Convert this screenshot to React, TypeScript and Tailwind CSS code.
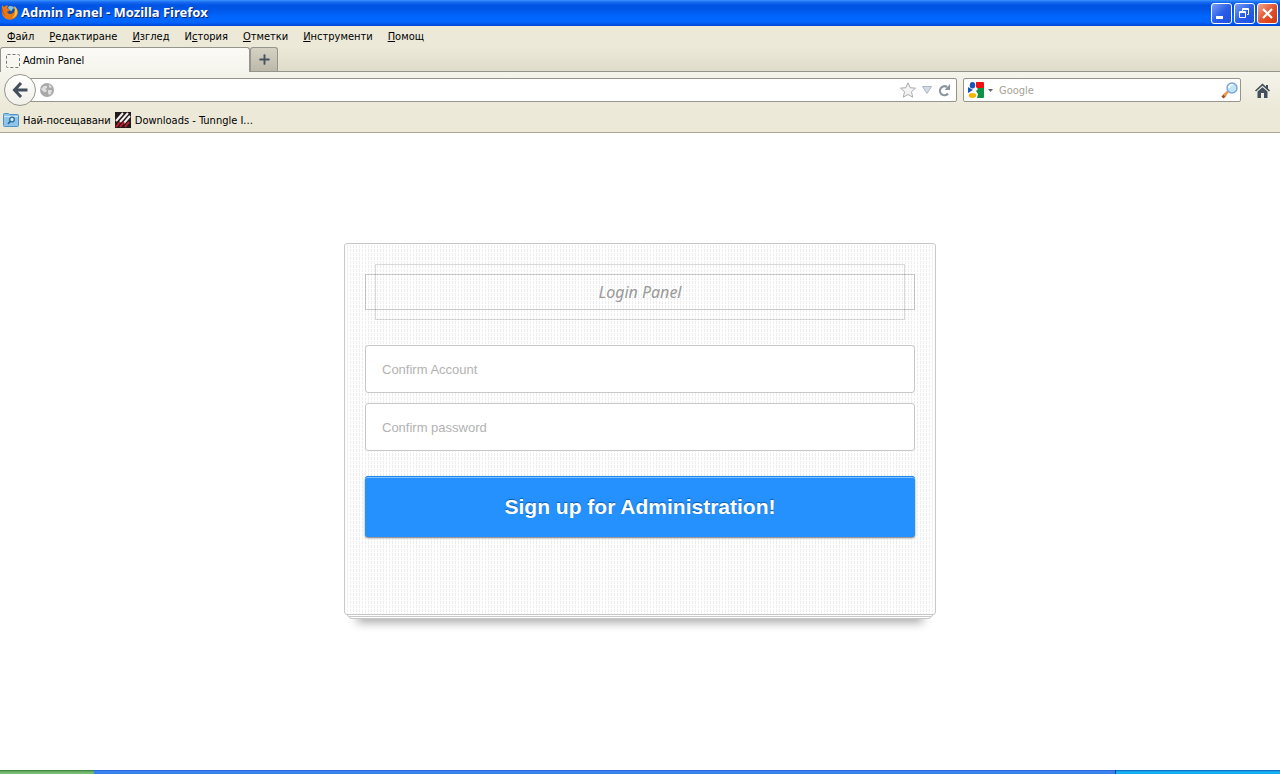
import {useState} from "react"
import {Plus} from "lucide-react"

interface IMenuItem {
    before: string
    key: string
    after: string
}

const menuItems: IMenuItem[] = [
    {before: "", key: "Ф", after: "айл"},
    {before: "", key: "Р", after: "едактиране"},
    {before: "", key: "И", after: "зглед"},
    {before: "И", key: "с", after: "тория"},
    {before: "", key: "О", after: "тметки"},
    {before: "", key: "И", after: "нструменти"},
    {before: "", key: "П", after: "омощ"},
]

function FirefoxLogo() {
    return (
        <svg width="18" height="18" viewBox="0 0 18 18" aria-hidden="true">
            <circle cx="9.5" cy="8" r="6.5" fill="#1d4f9e"/>
            <path d="M7 3c2-2 6-1 7 2-2-1-3 0-3 2-2 0-4-2-4-4z" fill="#7fc4ee"/>
            <path
                d="M1 1l2 2c1-1 3-2 4-1L6 4l3 2c0 1-2 1-3 2 1 2 4 3 6 1 2-1 2-4 1-7 5 3 5 9 1 12s-10 2-12-2C0 9 1 5 1 1z"
                fill="#e77817"/>
            <path d="M13 2c3 2 4 5 3 8-1 2-3 4-5 4 3-2 4-7 2-12z" fill="#fbc62c"/>
            <path d="M2 4c0 3 0 6 3 8-3-1-5-5-3-8z" fill="#b8410e"/>
        </svg>
    )
}

function TitleBar() {
    const control = "flex size-[21px] items-center justify-center rounded-[3px] border border-white"
    return (
        <div
            className="flex h-[26px] items-center justify-between bg-[linear-gradient(#3b95ff_0,#1a6df0_2px,#0054e3_5px,#0055e5_9px,#0066ff_17px,#0066ff_22px,#0046d5_26px)] pr-0.5">
            <div className="flex items-center gap-0.5 pl-px">
                <FirefoxLogo/>
                <span
                    className="font-['Noto_Sans','DejaVu_Sans',sans-serif] text-[13px] font-bold text-white [text-shadow:1px_1px_0_#0a246a]">Admin Panel - Mozilla Firefox</span>
            </div>
            <div className="flex gap-0.5">
                <button aria-label="Minimize"
                        className={`${control} bg-linear-to-br from-[#7a9cf4] via-[#2b5fe8] to-[#1b4fe0]`}>
                    <svg width="19" height="19"><path d="M4 13.5h7" stroke="#fff" strokeWidth="3"/></svg>
                </button>
                <button aria-label="Restore"
                        className={`${control} bg-linear-to-br from-[#7a9cf4] via-[#2b5fe8] to-[#1b4fe0]`}>
                    <svg width="19" height="19" fill="none" stroke="#fff">
                        <path d="M7.500 7V4.500h6v6H12M7 5.500h7"/>
                        <path d="M4.500 7.500h6v6h-6zM4 8.500h7"/>
                    </svg>
                </button>
                <button aria-label="Close"
                        className={`${control} bg-linear-to-br from-[#f0a48c] via-[#e2532c] to-[#d03a0c]`}>
                    <svg width="19" height="19"><path d="M5 5l9 9M14 5l-9 9" stroke="#fff" strokeWidth="2.2"/></svg>
                </button>
            </div>
        </div>
    )
}

function MenuBar() {
    return (
        <nav className="flex h-[21px] items-center gap-[15px] pt-0.5 pl-[7px]">
            {menuItems.map((item, index) => (
                <button key={index}>
                    {item.before}<span className="underline">{item.key}</span>{item.after}
                </button>
            ))}
        </nav>
    )
}

function TabStrip() {
    return (
        <div className="flex h-[25px] bg-linear-to-b from-[#ece9d8] to-[#dfdccb]">
            <button
                className="flex w-[250px] items-center gap-[3px] rounded-t-[3px] border border-b-0 border-[#96958b] bg-linear-to-b from-[#fbfaf6] to-[#f5f4ec] pt-0.5 pl-[5px]">
                <svg width="14" height="14" fill="none" stroke="#777" strokeDasharray="3 2">
                    <rect x=".5" y=".5" width="13" height="13" rx="1"/>
                </svg>
                Admin Panel
            </button>
            <div className="flex flex-1 border-b border-[#96958b]">
                <button aria-label="New tab"
                        className="flex w-7 items-center justify-center rounded-t-[3px] border border-b-0 border-[#96958b] bg-linear-to-b from-[#d5d2c3] to-[#bcb9ab]">
                    <Plus size={15} strokeWidth={3} color="#46525f"/>
                </button>
            </div>
        </div>
    )
}

function NavBar() {
    const [address, setAddress] = useState("")
    const [query, setQuery] = useState("")

    return (
        <div className="flex h-9 items-center bg-linear-to-b from-[#f5f4ec] to-[#ece9d8] pl-1 pr-2.5">
            <button aria-label="Back"
                    className="z-10 flex size-8 shrink-0 items-center justify-center rounded-full border border-[#96958b] bg-linear-to-b from-white to-[#f0efe8]">
                <svg width="16" height="16" viewBox="0 0 16 16" fill="none" stroke="#434f5c" strokeWidth="3">
                    <path d="M9 1L2.500 8 9 15M3 8h12.500"/>
                </svg>
            </button>
            <div
                className="-ml-2 flex h-6 flex-1 items-center gap-1.5 rounded-r-xs border border-[#96958b] bg-white pl-[11px] pr-[5px]">
                <svg width="14" height="14" viewBox="0 0 14 14" aria-hidden="true">
                    <circle cx="7" cy="7" r="7" fill="#a9a9a9"/>
                    <path d="M1 6l3-3 3 0 0 2-2 1 2 1-1 2-2 0zM9 1l3 3-2 1-1-1zM8 7l4 0-1 4-2 1-1-2z" fill="#dedede"/>
                </svg>
                <input aria-label="Address" className="min-w-0 flex-1 outline-none" value={address}
                       onChange={(e) => setAddress(e.target.value)}/>
                <button aria-label="Bookmark this page">
                    <svg width="16" height="16" viewBox="0 0 16 16">
                        <path d="M8 .8l2.200 4.900 5.300.500-4 3.500 1.200 5.500L8 12.500l-4.700 2.700 1.200-5.500-4-3.500 5.300-.500z"
                              fill="#f3f3f3" stroke="#ababab"/>
                    </svg>
                </button>
                <button aria-label="History">
                    <svg width="10" height="8"><path d="M.5.5h9L5 7.5z" fill="#d5dbe6" stroke="#b0b6c4"/></svg>
                </button>
                <button aria-label="Reload">
                    <svg width="13" height="13" viewBox="0 0 13 13">
                        <path d="M10 9.5A4.500 4.500 0 1 1 9 3" fill="none" stroke="#8c949e" strokeWidth="2.200"/>
                        <path d="M12 0v6H6.500z" fill="#8c949e"/>
                    </svg>
                </button>
            </div>
            <div
                className="ml-1.5 flex h-6 w-[278px] items-center rounded-xs border border-[#96958b] bg-white pl-[3px] pr-0.5">
                <svg width="17" height="16" viewBox="0 0 17 16" aria-hidden="true">
                    <path d="M9 0h7q1 0 1 1v5H9z" fill="#ef1010"/>
                    <path d="M9 6h8v9q0 1-1 1H8z" fill="#109244"/>
                    <path d="M1 5l5 3-5 3z" fill="#1a54b8"/>
                    <path d="M8 4l3 3-2 2 2 3-1 4H8l-3-6z" fill="#fff"/>
                    <ellipse cx="5.500" cy="3.200" rx="2.700" ry="3.200" fill="#1a54b8"/>
                    <ellipse cx="5.500" cy="13.500" rx="3.700" ry="2.400" fill="#f4b400"/>
                </svg>
                <button aria-label="Search engines" className="ml-1 mr-1.5">
                    <svg width="5" height="3"><path d="M0 0h5L2.500 3z" fill="#666"/></svg>
                </button>
                <input aria-label="Search" placeholder="Google" value={query}
                       className="min-w-0 flex-1 pt-0.5 outline-none placeholder:text-[#a5a295]"
                       onChange={(e) => setQuery(e.target.value)}/>
                <button aria-label="Go">
                    <svg width="17" height="17" viewBox="0 0 17 17">
                        <path d="M1.500 15.500l3-3" stroke="#9c4a1c" strokeWidth="3"/>
                        <path d="M3 13.500l4-4" stroke="#f09a4a" strokeWidth="2.500"/>
                        <circle cx="11" cy="6" r="5" fill="#bfe5fb" stroke="#7ba3d4" strokeWidth="1.400"/>
                        <path d="M8 6a3 3 0 0 1 4-3" fill="none" stroke="#fff" strokeWidth="1.600"/>
                    </svg>
                </button>
            </div>
            <button aria-label="Home" className="ml-3.5">
                <svg width="15" height="15" viewBox="0 0 15 15" fill="#434f5c">
                    <path d="M0 7.500L7.500.500 11 3.700V2h2v3.500l2 2-1 1L7.500 2.700 1 8.500z"/>
                    <path d="M2.500 8.500l5-4.300 5 4.300V15H9v-5H6v5H2.500z"/>
                </svg>
            </button>
        </div>
    )
}

function BookmarksBar() {
    return (
        <div className="flex h-[25px] items-center gap-1 border-b border-[#aca899] pl-[3px]">
            <button className="flex items-center gap-1">
                <svg width="16" height="14" viewBox="0 0 16 14">
                    <path d="M.5 1.500q0-1 1-1h4l1 1h8q1 0 1 1v10q0 1-1 1h-13q-1 0-1-1z" fill="#8ec5ec" stroke="#4f93c6"/>
                    <path d="M1 3.500h14" stroke="#c9e6f9"/>
                    <circle cx="9" cy="6.500" r="2.300" fill="#d6eefc" stroke="#2c6796" strokeWidth="1.300"/>
                    <path d="M7.300 8.300L5 11" stroke="#2c6796" strokeWidth="1.700"/>
                </svg>
                <span className="pt-0.5">Най-посещавани</span>
            </button>
            <a href="#downloads" className="flex items-center gap-1">
                <svg width="16" height="16" viewBox="0 0 16 16">
                    <rect width="16" height="16" fill="#211a1b"/>
                    <path d="M1 9l7-8M5 10l8-9M9 11l6-7" stroke="#f5f0f0" strokeWidth="2"/>
                    <path d="M1 15l4-5M5 15l4-5M10 15l4-5" stroke="#c41c2c" strokeWidth="2"/>
                </svg>
                <span className="pt-0.5">Downloads - Tunngle I...</span>
            </a>
        </div>
    )
}

function LoginPanel() {
    const [account, setAccount] = useState("")
    const [password, setPassword] = useState("")
    const field = "h-12 w-full rounded-[3px] border border-[#c8c8c8] bg-white px-4 text-[13px] text-[#555] outline-none placeholder:text-[#b2b2b2]"

    return (
        <div className="relative w-[592px]">
            {/* sheets stacked under the card */}
            <div className="absolute inset-x-[5px] -bottom-1 h-12 rounded-xs border border-[#c8c8c8] bg-white shadow-[0_12px_10px_-8px_rgba(0,0,0,0.32)]"/>
            <div className="absolute inset-x-[3px] -bottom-0.5 h-12 rounded-xs border border-[#c8c8c8] bg-white"/>
            <form
                onSubmit={(e) => e.preventDefault()}
                className="relative rounded-[3px] border border-[#c8c8c8] bg-white bg-[linear-gradient(#fff_1px,transparent_1px),linear-gradient(90deg,transparent_2px,#ededed_2px)] bg-size-[3px_4px] px-5 pt-5 pb-[76px] font-['Liberation_Sans',Arial,sans-serif]">
                <div className="mx-2.5 border border-black/15 py-[9px]">
                    <h1 className="-mx-[11px] border border-black/20 text-center font-['Noto_Sans','Open_Sans',sans-serif] text-base leading-[34px] text-[#999] italic">
                        Login Panel
                    </h1>
                </div>
                <div className="mt-[25px] flex flex-col gap-2.5">
                    <input aria-label="Account" type="text" placeholder="Confirm Account" className={field}
                           value={account} onChange={(e) => setAccount(e.target.value)}/>
                    <input aria-label="Password" type="password" placeholder="Confirm password" className={field}
                           value={password} onChange={(e) => setPassword(e.target.value)}/>
                </div>
                <button type="submit"
                        className="mt-[25px] mb-px h-[61px] w-full rounded-[3px] border-t border-[#1e87ea] bg-[#2491ff] text-[21px] font-bold text-white shadow-[inset_0_1px_0_#80bfff,0_1px_2px_#777] [text-shadow:0_-1px_1px_#0d5cab]">
                    Sign up for Administration!
                </button>
            </form>
        </div>
    )
}

function Taskbar() {
    return (
        <div className="flex h-1 bg-[linear-gradient(#245edb,#3f8cf3_2px,#2f78e0)]">
            <div className="w-[94px] rounded-tr-xs bg-[linear-gradient(#2f7d32,#6fb56c_2px,#7fbf7c)]"/>
            <div className="flex-1"/>
            <div className="w-[165px] border-l border-[#0a3a80] bg-[linear-gradient(#0c59b9,#18bbf8_2px,#12a5ee)]"/>
        </div>
    )
}

export default function App() {
    return (
        <div className="flex min-h-screen flex-col bg-white">
            <header
                className="bg-[#ece9d8] font-['DejaVu_Sans_Condensed','DejaVu_Sans',sans-serif] text-[11px] text-black">
                <TitleBar/>
                <MenuBar/>
                <TabStrip/>
                <NavBar/>
                <BookmarksBar/>
            </header>
            <main className="flex flex-1 items-start justify-center pt-[110px]">
                <LoginPanel/>
            </main>
            <Taskbar/>
        </div>
    )
}
